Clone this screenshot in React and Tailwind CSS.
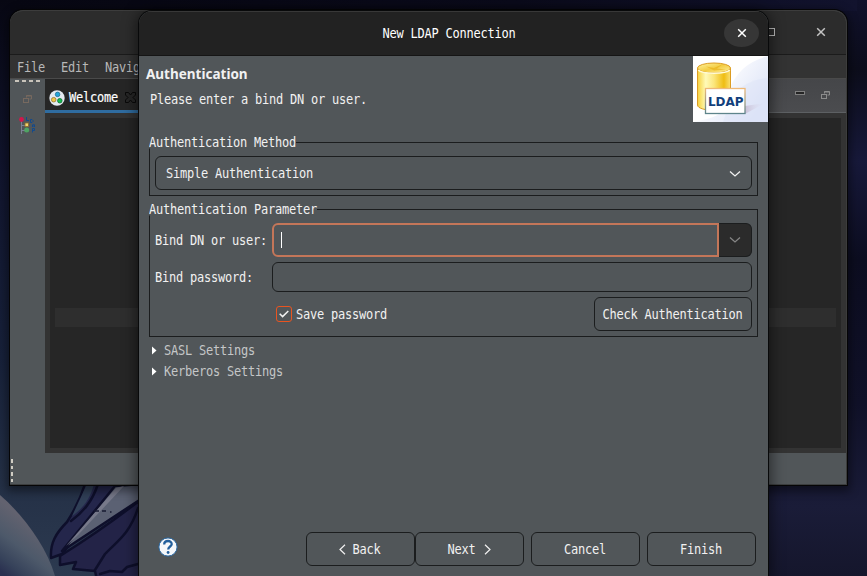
import React from "react";

const mono =
  "inline-block origin-center scale-y-[1.1] whitespace-pre font-['DejaVu_Sans_Mono',monospace] text-[12px] tracking-[-0.224px]";

function Mono({ children, className = "leading-[18px]" }) {
  return <span className={`${mono} ${className}`}>{children}</span>;
}

function Chevron({ className = "" }) {
  return (
    <svg width="12" height="8" viewBox="0 0 12 8" fill="none" stroke="currentColor" strokeWidth="1.3" className={className}>
      <path d="M1 1.5 6 6l5-4.5" />
    </svg>
  );
}

function Cross({ className = "" }) {
  return (
    <svg width="10" height="10" viewBox="0 0 10 10" fill="none" stroke="currentColor" strokeWidth="1.5" className={className}>
      <path d="M1.2 1.2l7.6 7.6M8.8 1.2 1.2 8.8" />
    </svg>
  );
}

function Wallpaper() {
  return (
    <svg className="absolute inset-0" width="867" height="576" viewBox="0 0 867 576">
      <defs>
        <linearGradient id="leftSky" x1="0" y1="0" x2="0" y2="1">
          <stop offset="0" stopColor="#070713" />
          <stop offset="0.3" stopColor="#11152e" />
          <stop offset="0.62" stopColor="#17213a" />
          <stop offset="0.82" stopColor="#232f45" />
          <stop offset="1" stopColor="#2c3a50" />
        </linearGradient>
        <linearGradient id="rightSky" x1="0" y1="0" x2="0" y2="1">
          <stop offset="0" stopColor="#10112b" />
          <stop offset="0.12" stopColor="#0c0d1b" />
          <stop offset="0.28" stopColor="#17193a" />
          <stop offset="0.45" stopColor="#0c0d20" />
          <stop offset="0.7" stopColor="#101128" />
          <stop offset="0.88" stopColor="#1a1c38" />
          <stop offset="1" stopColor="#15162c" />
        </linearGradient>
        <linearGradient id="topSky" x1="0" y1="0" x2="1" y2="0">
          <stop offset="0" stopColor="#070712" />
          <stop offset="0.6" stopColor="#0b0b1c" />
          <stop offset="1" stopColor="#12132e" />
        </linearGradient>
        <linearGradient id="arm" gradientUnits="userSpaceOnUse" x1="28" y1="522" x2="-6" y2="566">
          <stop offset="0" stopColor="#62626f" />
          <stop offset=".45" stopColor="#4d596a" />
          <stop offset=".8" stopColor="#36425a" />
          <stop offset="1" stopColor="#2a3050" />
        </linearGradient>
      </defs>
      <rect width="450" height="576" fill="url(#leftSky)" />
      <rect x="450" width="417" height="576" fill="url(#rightSky)" />
      <rect x="10" width="847" height="11" fill="url(#topSky)" />
      <path d="M0 495C22 514 46 545 55 576H0z" fill="url(#arm)" />
      <g strokeLinejoin="round" strokeLinecap="round" stroke="#0e0f2b" strokeWidth="2.5">
        <path d="M85 484C80 500 74 511 67 522C56 533 50 543 51 558L62 554L120 484z" fill="#24264b" />
        <path d="M87 484L72 516C82 509 90 500 94 484z" fill="#303f57" stroke="none" />
        <path d="M98 484C92 502 83 512 71 521" fill="none" />
        <path d="M139 501C117 518 92 536 60 556L60 565L76 562L73 569L95 571L97 580H141z" fill="#232347" />
        <path d="M115 486L62 551L141 499V484z" fill="#5b6173" />
        <path d="M116 488L66 546L78 535L124 486z" fill="#77798a" stroke="none" />
        <path d="M138 508C130 534 116 542 105 554L95 570" fill="none" />
        <path d="M100 574L110 571L122 572L127 567L138 564" fill="none" />
      </g>
      <path d="M94 511h5M102 511h4M110 512h1.500" stroke="#171a32" strokeWidth="1.500" />
    </svg>
  );
}

function WelcomeIcon() {
  return (
    <svg width="16" height="16" viewBox="0 0 16 16" className="shrink-0">
      <circle cx="8" cy="8" r="7.7" fill="#e4eaf0" />
      <circle cx="8.6" cy="4.4" r="2.3" fill="#25a6d8" stroke="#17648c" strokeWidth=".7" />
      <circle cx="4.7" cy="9.7" r="2.3" fill="#efc648" stroke="#8b6b22" strokeWidth=".7" />
      <circle cx="10.8" cy="10.7" r="2.3" fill="#15bd51" stroke="#08602a" strokeWidth=".7" />
    </svg>
  );
}

function RestoreIcon({ className = "" }) {
  return (
    <svg width="9" height="8" viewBox="0 0 9 8" fill="none" stroke="currentColor" className={className}>
      <path d="M3.5 2.5v-2h5v3.500h-2" />
      <path d="M3 1h5.500" />
      <rect x=".5" y="3.500" width="5" height="4" />
    </svg>
  );
}

function LdapPerspectiveIcon() {
  return (
    <svg width="16" height="17" viewBox="0 0 16 17" className="overflow-visible">
      <path d="M2.500 4v13M2.500 8.500H6M2.500 13.500H6" stroke="#7b8294" fill="none" />
      <circle cx="2.500" cy="2.500" r="2.400" fill="#d2164b" />
      <rect x="6" y="6" width="3.500" height="3.500" fill="#f1d271" stroke="#8a6a25" strokeWidth=".8" />
      <circle cx="7.700" cy="13" r="2.500" fill="#4fa463" />
      <path
        d="M7.500 0v3.500h2.500M11.500 2.500v3h1.500l1-1v-1l-1-1zM13.500 10V8l1-1 1 1v2M13.500 9h2M13.500 15.500v-4h2v2h-2"
        fill="none"
        stroke="#134a8c"
      />
    </svg>
  );
}

function MainWindow() {
  return (
    <div className="absolute left-[10px] top-[10px] flex h-[475px] w-[837px] flex-col overflow-hidden rounded-t-[13px] border-r border-t border-[#3c3c3c] bg-[#515659] shadow-[0_0_0_1px_#050506,0_3px_10px_3px_rgba(0,0,0,0.45)]">
      <div className="flex h-[44px] shrink-0 items-center justify-end border-b border-[#1b1b1b] bg-[#2c2c2c] pb-px pr-5 text-[#c3c3c3]">
        <span className="mr-[41px] size-2 border border-[#bdbdbd]" />
        <Cross />
      </div>
      <div className="flex h-[24px] shrink-0 items-center gap-4 border-b border-[#4a4a4a] bg-[#333333] pl-[7px] pt-[2px] text-[#b8b8b8]">
        <Mono>File</Mono>
        <Mono>Edit</Mono>
        <Mono>Navig</Mono>
      </div>
      <div className="flex h-[374px] shrink-0">
        <div className="flex w-[35px] shrink-0 flex-col items-center">
          <div className="flex h-[3px] gap-[3px] pt-px">
            <i className="h-0.5 w-1 bg-[#c9c4bb]" />
            <i className="h-0.5 w-1 bg-[#c9c4bb]" />
            <i className="h-0.5 w-1 bg-[#c9c4bb]" />
            <i className="h-0.5 w-1 bg-[#c9c4bb]" />
          </div>
          <RestoreIcon className="mt-[13px] text-[#77695f]" />
          <div className="mt-[14px] pr-px">
            <LdapPerspectiveIcon />
          </div>
        </div>
        <div className="flex grow flex-col bg-[#333333]">
          <div className="flex h-[34px] shrink-0">
            <div className="flex w-[120px] items-center border-b-[3px] border-[#2f6ca0] bg-[#262626] pl-1 pt-[6px]">
              <WelcomeIcon />
              <Mono className="ml-1 leading-[18px] text-white [-webkit-text-stroke:0.15px_white]">Welcome</Mono>
              <svg width="11" height="11" viewBox="0 0 11 11" className="ml-[7px]" fill="none" stroke="#090909">
                <path d="M.5.5h3l2 2.500 2-2.500h3v2.500L8 5.500l2.500 2.500v2.500h-3l-2-2.500-2 2.500h-3V8L3 5.500.5 3z" />
              </svg>
            </div>
            <div className="flex grow items-center justify-end gap-4 border-b border-[#5d6063] bg-linear-to-b from-[#454649] to-[#4b4c4f] pb-px pr-4">
              <span className="mb-1 h-1 w-[10px] border border-[#808080] bg-[#252525]" />
              <RestoreIcon className="text-[#8c8c8c]" />
            </div>
          </div>
          <div className="mx-[5px] mb-[5px] mt-[5px] grow bg-[#262626] px-[5px] pt-[190px]">
            <div className="h-[19px] bg-[#2e2e2e]" />
          </div>
        </div>
      </div>
      <div className="flex grow flex-col gap-[3px] border-b border-[#3c3e3f] pl-px pt-[6px]">
        <i className="h-[3.500px] w-0.5 bg-[#d0cdc4]" />
        <i className="h-[3.500px] w-0.5 bg-[#d0cdc4]" />
        <i className="h-[3.500px] w-0.5 bg-[#d0cdc4]" />
        <i className="h-[3.500px] w-0.5 bg-[#d0cdc4]" />
      </div>
    </div>
  );
}

function LdapBanner() {
  return (
    <svg width="75" height="66" viewBox="0 0 75 66" className="block shrink-0">
      <defs>
        <linearGradient id="bannerBg" x1="0" y1="0" x2="1" y2=".65">
          <stop offset=".35" stopColor="#fff" />
          <stop offset="1" stopColor="#dce3f7" />
        </linearGradient>
        <linearGradient id="gold" x1="0" x2="1">
          <stop offset="0" stopColor="#f6d13c" />
          <stop offset=".25" stopColor="#fffab8" />
          <stop offset=".5" stopColor="#fbe67c" />
          <stop offset=".8" stopColor="#efbd12" />
          <stop offset="1" stopColor="#fae074" />
        </linearGradient>
        <linearGradient id="goldTop" x1="0" y1="0" x2="1" y2="1">
          <stop offset="0" stopColor="#fff5a1" />
          <stop offset=".5" stopColor="#f3cd45" />
          <stop offset="1" stopColor="#fff2a0" />
        </linearGradient>
        <linearGradient id="plate" x1="0" y1="0" x2="0" y2="1">
          <stop offset="0" stopColor="#eeb978" />
          <stop offset="1" stopColor="#5e858b" />
        </linearGradient>
        <linearGradient id="plateShadow" x1="0" x2="1">
          <stop offset="0" stopColor="#c9c0d6" />
          <stop offset="1" stopColor="#dfe3f5" stopOpacity="0" />
        </linearGradient>
      </defs>
      <rect width="75" height="66" fill="#fff" />
      <path d="M36 33C45 14 56 5 75 0V66H0C20 62 36 60 36 33z" fill="url(#bannerBg)" />
      <path d="M40 38C50 28 62 23 75 22V66H30z" fill="#dbe2f7" opacity=".45" />
      <path d="M52 50 72 47 52 58z" fill="url(#plateShadow)" />
      <path d="M4.500 12v37c0 7 33 7 33 0V12z" fill="url(#gold)" stroke="#dc9c22" />
      <ellipse cx="21" cy="12" rx="16.500" ry="5" fill="url(#goldTop)" stroke="#dc9c22" />
      <path d="M5.200 14C9 18.300 33 18.300 36.800 14" fill="none" stroke="#fffbd6" strokeWidth="1.500" />
      <path d="M13 10.500 21 12l9-4-6 4.500 9 1-12 1z" fill="#e8ad14" opacity=".6" />
      <rect x="12.500" y="32.500" width="39.500" height="25" fill="#fff" stroke="url(#plate)" strokeWidth="1.300" />
      <text x="15" y="50" textLength="35.500" lengthAdjust="spacingAndGlyphs" fontFamily="DejaVu Sans" fontWeight="bold" fontSize="12.500" fill="#123f7c">
        LDAP
      </text>
    </svg>
  );
}

function Group({ title, className = "", children }) {
  return (
    <section className={`border border-[#1b1d1e] ${className}`}>
      <h2 className="-ml-px -mt-[9px] flex h-[18px] items-center">
        <Mono className="bg-[#515659] leading-[10px]">{title}</Mono>
      </h2>
      {children}
    </section>
  );
}

function Button({ className = "", children }) {
  return (
    <button className={`flex h-[34px] items-center justify-center rounded-[6px] border border-[#1b1d1e] pr-px pt-[2px] text-[#f1f1f1] ${className}`}>
      {children}
    </button>
  );
}

function Disclosure({ children }) {
  return (
    <div className="flex h-[21px] items-center">
      <svg width="5" height="9" viewBox="0 0 5 9" fill="#ffffff">
        <path d="M0 .5 4.500 4.500 0 8.500z" />
      </svg>
      <Mono className="ml-[7px] leading-[18px] text-[#c5c7c8]">{children}</Mono>
    </div>
  );
}

function Dialog() {
  return (
    <div className="absolute left-[139px] top-[11px] flex h-[565px] w-[629px] flex-col overflow-hidden rounded-t-[13px] bg-[#515659] text-[#f1f1f1] shadow-[0_0_0_1px_#08090a,0_2px_14px_3px_rgba(0,0,0,0.5)]">
      <header className="flex h-[45px] shrink-0 items-center border-b border-t border-b-[#151515] border-t-[#383838] bg-[#222222] pb-[2px] pl-[35px] pr-[9px]">
        <div className="grow pb-px text-center">
          <Mono className="leading-[18px] text-white">New LDAP Connection</Mono>
        </div>
        <button className="flex h-[28px] w-[35px] items-center justify-center rounded-[50%] bg-[#363636] text-white">
          <Cross />
        </button>
      </header>
      <div className="flex h-[66px] shrink-0 justify-between">
        <div className="pl-[7px] pt-2">
          <h1 className="font-['Noto_Sans',sans-serif] text-[13.5px] font-bold leading-5">Authentication</h1>
          <p className="flex pl-[4px] pt-[7px]">
            <Mono>Please enter a bind DN or user.</Mono>
          </p>
        </div>
        <LdapBanner />
      </div>
      <main className="flex grow flex-col pl-[10px] pr-[10px] pt-5">
        <Group title="Authentication Method" className="h-[54px]">
          <div className="mx-[5px] mt-1 flex h-[34px] items-center justify-between rounded-[6px] border border-[#1b1d1e] pl-[10px] pr-[10px] pt-px">
            <Mono className="pt-px leading-[18px]">Simple Authentication</Mono>
            <Chevron />
          </div>
        </Group>
        <Group title="Authentication Parameter" className="mt-[13px] h-[128px]">
          <div className="mx-[5px] mt-1 flex h-[34px] items-center">
            <Mono className="w-[117px] pt-px leading-[18px]">Bind DN or user:</Mono>
            <div className="flex h-[34px] grow items-center rounded-l-[6px] border-2 border-[#c47659] pl-[7px]">
              <span className="h-4 w-px bg-white" />
            </div>
            <div className="flex h-[34px] w-[33px] items-center justify-center rounded-r-[6px] border border-l-0 border-[#1b1d1e] bg-[#2b2b2b] text-[#858585]">
              <Chevron />
            </div>
          </div>
          <div className="mx-[5px] mt-[5px] flex h-[30px] items-center">
            <Mono className="w-[117px] pt-px leading-[18px]">Bind password:</Mono>
            <div className="h-[30px] grow rounded-[6px] border border-[#1b1d1e]" />
          </div>
          <div className="ml-[126px] mr-[5px] mt-[5px] flex h-[34px] items-center">
            <span className="flex size-4 items-center justify-center rounded-[3px] border border-[#e95420]">
              <svg width="10" height="8" viewBox="0 0 10 8" fill="none" stroke="#f1f1f1" strokeWidth="1.500">
                <path d="M.7 3.800 3.600 6.600 9.300 1" />
              </svg>
            </span>
            <Mono className="ml-1 grow pt-px leading-[18px]">Save password</Mono>
            <Button className="w-[158px]">
              <Mono>Check Authentication</Mono>
            </Button>
          </div>
        </Group>
        <div className="mt-[3px] pl-[3px]">
          <Disclosure>SASL Settings</Disclosure>
          <Disclosure>Kerberos Settings</Disclosure>
        </div>
      </main>
      <footer className="flex shrink-0 items-center pb-[10px] pl-[19px] pr-3">
        <svg width="20" height="20" viewBox="0 0 20 20" className="mb-1">
          <circle cx="10" cy="10" r="9.100" fill="#f5f7fa" stroke="#2868a4" />
          <path d="M6.200 7.500C6.300 2.800 13.900 3 13.700 7.200c-.1 2.200-3.500 2.500-3.500 5.300" fill="none" stroke="#235f9c" strokeWidth="2.300" />
          <circle cx="10.100" cy="15.500" r="1.400" fill="#235f9c" />
        </svg>
        <div className="ml-auto flex">
          <Button className="w-[109px]">
            <svg width="7" height="11" viewBox="0 0 7 11" fill="none" stroke="currentColor" strokeWidth="1.200" className="mb-[2px] mr-[6px]">
              <path d="M6 .8 1 5.500l5 4.700" />
            </svg>
            <Mono>Back</Mono>
          </Button>
          <Button className="w-[109px]">
            <Mono>Next</Mono>
            <svg width="7" height="11" viewBox="0 0 7 11" fill="none" stroke="currentColor" strokeWidth="1.200" className="mb-[2px] ml-2">
              <path d="M1 .8l5 4.700-5 4.700" />
            </svg>
          </Button>
          <Button className="ml-[7px] w-[109px]">
            <Mono>Cancel</Mono>
          </Button>
          <Button className="ml-[7px] w-[109px]">
            <Mono>Finish</Mono>
          </Button>
        </div>
      </footer>
    </div>
  );
}

export default function App() {
  return (
    <div className="relative h-[576px] w-[867px] overflow-hidden bg-[#0c0d20]">
      <Wallpaper />
      <MainWindow />
      <Dialog />
    </div>
  );
}
